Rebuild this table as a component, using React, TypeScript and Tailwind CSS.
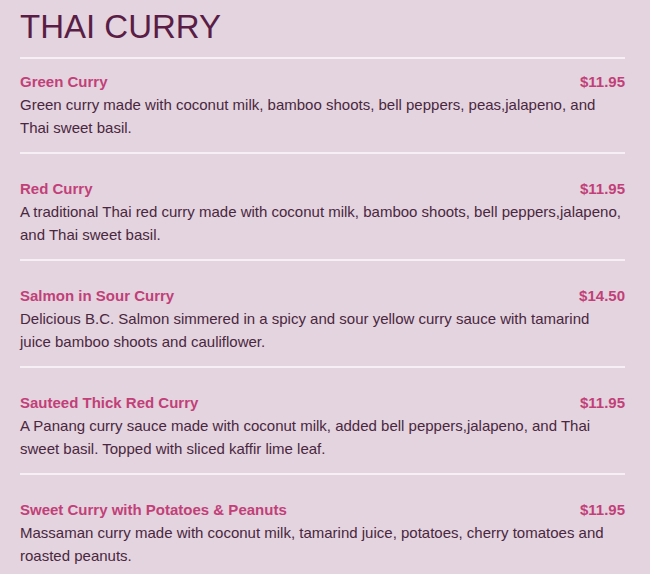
const ITEMS = [
  {
    name: 'Green Curry',
    price: '$11.95',
    desc: 'Green curry made with coconut milk, bamboo shoots, bell peppers, peas,jalapeno, and Thai sweet basil.',
  },
  {
    name: 'Red Curry',
    price: '$11.95',
    desc: 'A traditional Thai red curry made with coconut milk, bamboo shoots, bell peppers,jalapeno, and Thai sweet basil.',
  },
  {
    name: 'Salmon in Sour Curry',
    price: '$14.50',
    desc: 'Delicious B.C. Salmon simmered in a spicy and sour yellow curry sauce with tamarind juice bamboo shoots and cauliflower.',
  },
  {
    name: 'Sauteed Thick Red Curry',
    price: '$11.95',
    desc: 'A Panang curry sauce made with coconut milk, added bell peppers,jalapeno, and Thai sweet basil. Topped with sliced kaffir lime leaf.',
  },
  {
    name: 'Sweet Curry with Potatoes & Peanuts',
    price: '$11.95',
    desc: 'Massaman curry made with coconut milk, tamarind juice, potatoes, cherry tomatoes and roasted peanuts.',
  },
];

export default function App() {
  return (
    <div className="h-[574px] w-[650px] overflow-hidden bg-[#e3d4df] font-['Liberation_Sans',Arial,sans-serif]">
      <div className="ml-5 w-[605px] pt-[11px]">
        <h1 className="text-[33px] leading-[32px] text-[#5a1d45]">THAI CURRY</h1>
        <div className="mt-[14px] h-[2px] bg-[#f6eff4]" />

        <ul>
          {ITEMS.map((item, i) => (
            <li key={item.name} className={i === 0 ? 'pt-3' : 'pt-6'}>
              <div className="flex justify-between text-[15px] font-bold leading-[22px] text-[#c23f78]">
                <span>{item.name}</span>
                <span>{item.price}</span>
              </div>
              <p className="pr-[2px] text-[15px] leading-[23px] text-[#4a273e]">{item.desc}</p>
              <div className="mt-[13px] h-[2px] bg-[#f6eff4]" />
            </li>
          ))}
        </ul>
      </div>
    </div>
  );
}
